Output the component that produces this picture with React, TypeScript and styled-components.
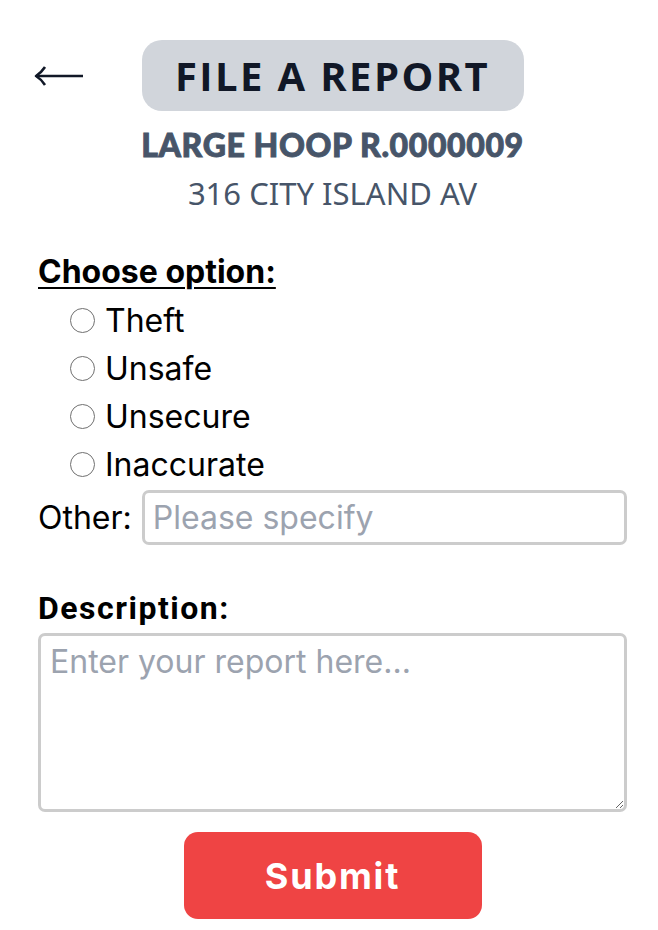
import React from "react";
import styled, { createGlobalStyle } from "styled-components";

const Global = createGlobalStyle`
  html, body { margin: 0; padding: 0; background: #fff; }
  body { font-family: Inter, "Noto Sans", sans-serif; color: #000; }
`;

const Page = styled.div`
  width: 589px;
  padding: 40px 0 11px 38px;
  display: flex;
  flex-direction: column;
`;

const Header = styled.div`
  display: flex;
  align-items: center;
  position: relative;
  justify-content: center;
  height: 71px;
`;

const BackButton = styled.button`
  position: absolute;
  left: -4px;
  top: 20px;
  border: 0;
  background: transparent;
  padding: 0;
  width: 52px;
  height: 32px;
  cursor: pointer;
  display: flex;
  align-items: center;
`;

const TitleBox = styled.h1`
  margin: 0;
  height: 71px;
  width: 382px;
  box-sizing: border-box;
  border-radius: 20px;
  background: #d1d5db;
  display: flex;
  align-items: center;
  justify-content: center;
  font-family: "Open Sans", "Noto Sans", sans-serif;
  font-weight: 700;
  font-size: 40px;
  letter-spacing: 2.4px;
  color: #111827;
`;

const Asset = styled.div`
  margin-top: 16px;
  text-align: center;
  font-family: Lato, sans-serif;
  font-weight: 900;
  font-size: 32px;
  line-height: 36px;
  letter-spacing: 0.6px;
  color: #475569;
  -webkit-text-stroke: 0.9px #475569;
`;

const Address = styled.div`
  margin-top: 10px;
  text-align: center;
  font-family: "Noto Sans", sans-serif;
  font-size: 31px;
  line-height: 40px;
  color: #475569;
`;

const SectionLabel = styled.div<{ $underline?: boolean; $font?: string }>`
  font-family: ${(p) => p.$font || "Inter"}, sans-serif;
  font-weight: 700;
  font-size: 32px;
  line-height: 34px;
  text-decoration: ${(p) => (p.$underline ? "underline" : "none")};
  text-underline-offset: 4px;
  text-decoration-thickness: 2px;
`;

const Options = styled.div`
  display: flex;
  flex-direction: column;
  padding-left: 32px;
  margin-top: 7px;
`;

const OptionRow = styled.label`
  display: flex;
  align-items: center;
  gap: 10px;
  height: 48px;
  font-size: 32px;
  cursor: pointer;
`;

const Radio = styled.input.attrs({ type: "radio" })`
  appearance: none;
  margin: 0;
  width: 25px;
  height: 25px;
  border-radius: 50%;
  border: 1.6px solid #707070;
  box-sizing: border-box;
  background: #fff;
  flex: none;
`;

const OtherRow = styled.div`
  display: flex;
  align-items: center;
  gap: 10px;
  font-size: 32px;
  margin-top: 2px;
`;

const TextInput = styled.input`
  flex: 1;
  min-width: 0;
  height: 55px;
  box-sizing: border-box;
  border: 3px solid #cccccc;
  border-radius: 7px;
  padding: 0 8px;
  font-family: Inter, sans-serif;
  font-size: 32px;
  outline: none;
  &::placeholder { color: #9ca3af; }
`;

const DescLabel = styled(SectionLabel)`
  margin-top: 46px;
  letter-spacing: 1.5px;
`;

const TextArea = styled.textarea`
  margin-top: 8px;
  width: 100%;
  height: 179px;
  box-sizing: border-box;
  border: 3px solid #cccccc;
  border-radius: 7px;
  padding: 4px 9px;
  font-family: Inter, sans-serif;
  font-size: 32px;
  line-height: 44px;
  outline: none;
  resize: vertical;
  &::placeholder { color: #9ca3af; }
`;

const SubmitButton = styled.button`
  align-self: center;
  margin-top: 20px;
  width: 298px;
  height: 87px;
  border: 0;
  border-radius: 14px;
  background: #ef4444;
  color: #fff;
  font-family: Inter, sans-serif;
  font-weight: 700;
  font-size: 36px;
  letter-spacing: 1.8px;
  cursor: pointer;
`;

const options = ["Theft", "Unsafe", "Unsecure", "Inaccurate"];

export default function App() {
  return (
    <>
      <Global />
      <Page>
        <Header>
          <BackButton aria-label="Back">
            <svg width="52" height="32" viewBox="0 0 52 32" fill="none">
              <path d="M2 16 H49" stroke="#111827" strokeWidth="2.6" />
              <path d="M11 7 Q7 13 2 16 Q7 19 11 25" stroke="#111827" strokeWidth="2.6" fill="none" strokeLinejoin="round" />
            </svg>
          </BackButton>
          <TitleBox>FILE A REPORT</TitleBox>
        </Header>
        <Asset>LARGE HOOP R.0000009</Asset>
        <Address>316 CITY ISLAND AV</Address>
        <SectionLabel $underline style={{ marginTop: 42 }}>Choose option:</SectionLabel>
        <Options>
          {options.map((o) => (
            <OptionRow key={o}>
              <Radio name="opt" value={o} />
              {o}
            </OptionRow>
          ))}
        </Options>
        <OtherRow>
          Other:
          <TextInput placeholder="Please specify" />
        </OtherRow>
        <DescLabel $font="Roboto">Description:</DescLabel>
        <TextArea placeholder="Enter your report here..." />
        <SubmitButton>Submit</SubmitButton>
      </Page>
    </>
  );
}
